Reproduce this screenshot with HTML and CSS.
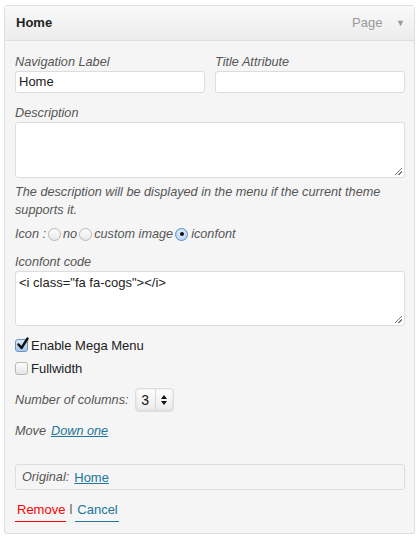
FILE: index.html
```html
<!DOCTYPE html>
<html>
<head>
<meta charset="utf-8">
<link rel="stylesheet" href="styles.css">
</head>
<body>
<div class="panel">
  <div class="head">
    <span class="head-title">Home</span>
    <span class="head-type">Page <span class="arrow">&#9660;</span></span>
  </div>
  <div class="body">
    <div class="row2">
      <div class="field">
        <div class="lbl">Navigation Label</div>
        <div class="input">Home</div>
      </div>
      <div class="field">
        <div class="lbl">Title Attribute</div>
        <div class="input"></div>
      </div>
    </div>
    <div class="lbl lbl-desc">Description</div>
    <div class="textarea ta-desc"><span class="grip"></span></div>
    <div class="help">The description will be displayed in the menu if the current theme supports it.</div>
    <div class="icon-row">
      <span>Icon :</span>
      <span class="radio"></span><span>no</span>
      <span class="radio"></span><span>custom image</span>
      <span class="radio on"><span class="dot"></span></span><span>iconfont</span>
    </div>
    <div class="lbl lbl-code">Iconfont code</div>
    <div class="textarea ta-code">&lt;i class="fa fa-cogs"&gt;&lt;/i&gt;<span class="grip"></span></div>
    <div class="check-row mega">
      <span class="check on"><svg viewBox="0 0 14 14" width="14" height="14"><path d="M2.5 7.5 L5.5 11 L11.5 1.5" fill="none" stroke="#111" stroke-width="2.4" stroke-linecap="round" stroke-linejoin="round"/></svg></span>
      <span>Enable Mega Menu</span>
    </div>
    <div class="check-row full">
      <span class="check"></span>
      <span>Fullwidth</span>
    </div>
    <div class="cols-row">
      <span class="it">Number of columns:</span>
      <span class="select"><span class="sel-val">3</span><span class="sel-arr"><svg viewBox="0 0 8 12" width="8" height="12"><path d="M4 1 L7 5 L1 5 Z M4 11 L1 7 L7 7 Z" fill="#111"/></svg></span></span>
    </div>
    <div class="move-row">
      <span class="it">Move</span>
      <a class="link it">Down one</a>
    </div>
    <div class="original">
      <span class="it">Original:</span>
      <a class="link">Home</a>
    </div>
    <div class="actions">
      <a class="remove">Remove</a>
      <span class="sep">|</span>
      <a class="cancel">Cancel</a>
    </div>
  </div>
</div>
</body>
</html>
```
FILE: styles.css
```css
html, body {
  margin: 0;
  padding: 0;
  background: #fff;
}
body {
  font-family: "Liberation Sans", Arial, sans-serif;
  font-size: 13px;
  color: #333;
}
.panel {
  margin: 5px 4px 0 4px;
  width: 411px;
  height: 529px;
  box-sizing: border-box;
  border: 1px solid #dfdfdf;
  border-radius: 3px;
  background: #f5f5f5;
  box-shadow: 0 1px 1px rgba(0,0,0,0.06);
}
.head {
  height: 35px;
  box-sizing: border-box;
  border-bottom: 1px solid #dfdfdf;
  background: linear-gradient(#f9f9f9, #ececec);
  display: flex;
  align-items: center;
  justify-content: space-between;
  padding: 0 9px 1px 11px;
}
.head-title {
  font-weight: bold;
  color: #222;
  font-size: 13px;
}
.head-type {
  color: #999;
  font-size: 13px;
}
.arrow {
  font-size: 9px;
  color: #999;
  margin-left: 10px;
  position: relative;
  top: -1px;
}
.body {
  padding: 13px 9px 0 10px;
}
.row2 {
  display: flex;
  gap: 10px;
}
.field {
  flex: 1;
}
.lbl, .it, .help, .icon-row {
  font-style: italic;
  color: #555;
  font-size: 12.7px;
}
.lbl {
  line-height: 16px;
}
.input {
  margin-top: 1px;
  height: 22px;
  box-sizing: border-box;
  border: 1px solid #dddddd;
  border-radius: 3px;
  background: #fff;
  padding: 2px 3px;
  line-height: 16px;
  color: #222;
  font-size: 13px;
}
.lbl-desc {
  margin-top: 12px;
}
.textarea {
  position: relative;
  margin-top: 1px;
  box-sizing: border-box;
  border: 1px solid #dddddd;
  border-radius: 3px;
  background: #fff;
  color: #222;
  padding: 3px 3px;
  line-height: 16px;
}
.ta-desc {
  height: 56px;
}
.ta-code {
  height: 55px;
}
.grip {
  position: absolute;
  right: 2px;
  bottom: 2px;
  width: 7px;
  height: 7px;
  background: linear-gradient(135deg, transparent 45%, #777 45%, #777 55%, transparent 55%, transparent 70%, #777 70%, #777 80%, transparent 80%);
}
.help {
  margin-top: 5px;
  line-height: 18px;
}
.icon-row {
  margin-top: 6px;
  display: flex;
  align-items: center;
  height: 18px;
}
.radio {
  display: inline-block;
  width: 13px;
  height: 13px;
  box-sizing: border-box;
  border: 1px solid #b8b8b8;
  border-radius: 50%;
  background: linear-gradient(#fff, #e8e8e8);
  margin: 0 2px 0 2px;
  position: relative;
}
.radio.on {
  border-color: #5c8fc9;
  background: radial-gradient(circle at 50% 40%, #e8f2fd, #a9caf0);
  margin-right: 3px;
}
.dot {
  position: absolute;
  left: 3.5px;
  top: 3.5px;
  width: 4px;
  height: 4px;
  border-radius: 50%;
  background: #111;
}
.lbl-code {
  margin-top: 11px;
}
.check-row {
  display: flex;
  align-items: center;
  color: #222;
  height: 18px;
}
.mega {
  margin-top: 10px;
}
.full {
  margin-top: 5px;
}
.check {
  display: inline-block;
  width: 13px;
  height: 13px;
  box-sizing: border-box;
  border: 1px solid #b8b8b8;
  border-radius: 3px;
  background: linear-gradient(#fff, #e5e5e5);
  margin: 0 3px 0 0;
  position: relative;
}
.check.on {
  border-color: #6a95c6;
  background: linear-gradient(#dbe9f9, #a8c6ea);
}
.check svg {
  position: absolute;
  left: 0;
  top: -3px;
}
.cols-row {
  margin-top: 11px;
  display: flex;
  align-items: center;
  height: 24px;
}
.select {
  margin-left: 6px;
  display: inline-flex;
  height: 24px;
  box-sizing: border-box;
  border: 1px solid #dcdcdc;
  border-radius: 4px;
  background: linear-gradient(#fff, #eaeaea);
  box-shadow: inset 0 0 3px rgba(0,0,0,0.12);
  color: #111;
  font-size: 14px;
}
.sel-val {
  width: 19px;
  text-align: center;
  line-height: 22px;
  border-right: 1px solid #d8d8d8;
}
.sel-arr {
  width: 17px;
  display: flex;
  align-items: center;
  justify-content: center;
}
.move-row {
  margin-top: 10px;
  height: 18px;
  display: flex;
  align-items: center;
  gap: 5px;
}
.link {
  color: #21759b;
  text-decoration: underline;
}
.original {
  margin-top: 24px;
  height: 26px;
  box-sizing: border-box;
  border: 1px solid #dddddd;
  border-radius: 3px;
  display: flex;
  align-items: center;
  padding: 0 6px;
  gap: 5px;
}
.original .link {
  font-size: 13px;
}
.actions {
  margin-top: 10px;
  display: flex;
  align-items: flex-start;
  gap: 3px;
  height: 24px;
}
.remove {
  color: #ff0000;
  border-bottom: 1px solid #ff0000;
  padding: 2px 1px 4px 2px;
}
.cancel {
  color: #21759b;
  border-bottom: 1px solid #21759b;
  padding: 2px 1px 4px 2px;
}
.sep {
  color: #333;
  font-size: 11px;
  line-height: 16px;
}
```
